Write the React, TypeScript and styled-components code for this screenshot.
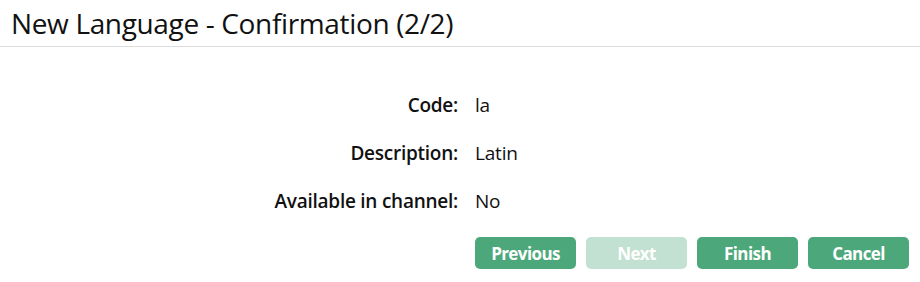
import React from 'react'
import styled, { createGlobalStyle } from 'styled-components'

const GlobalStyle = createGlobalStyle`
  html, body {
    margin: 0;
    padding: 0;
    background: #ffffff;
  }
  body {
    font-family: "Open Sans", "Noto Sans", sans-serif;
    color: #111111;
  }
`

const Page = styled.div`
  width: 920px;
  height: 282px;
  display: flex;
  flex-direction: column;
`

const Header = styled.div`
  height: 46px;
  border-bottom: 1px solid #dddddd;
  padding-left: 11px;
  display: flex;
  align-items: center;
`

const Title = styled.h1`
  margin: 0;
  font-size: 28px;
  font-weight: 400;
  letter-spacing: -0.35px;
  color: #111111;
`

const Body = styled.div`
  display: flex;
  flex-direction: column;
  padding: 34px 11px 0 0;
`

const Details = styled.div`
  display: grid;
  grid-template-columns: 458px auto;
  column-gap: 17px;
  row-gap: 0;
`

const Label = styled.div`
  text-align: right;
  font-size: 19px;
  font-weight: 600;
  letter-spacing: -0.25px;
  line-height: 48px;
`

const Value = styled.div`
  font-size: 19px;
  letter-spacing: -0.2px;
  line-height: 48px;
`

const Buttons = styled.div`
  display: flex;
  justify-content: flex-end;
  gap: 10px;
  margin-top: 12px;
`

const Button = styled.button<{ $disabled?: boolean }>`
  width: 101px;
  height: 32px;
  border: none;
  border-radius: 5px;
  background: ${p => (p.$disabled ? '#c3e1d2' : '#4ca87a')};
  color: #ffffff;
  font-family: "Open Sans", "Noto Sans", sans-serif;
  font-size: 17px;
  font-weight: 700;
  letter-spacing: -0.6px;
  padding: 0;
  cursor: ${p => (p.$disabled ? 'default' : 'pointer')};
`

const rows = [
  { label: 'Code:', value: 'la' },
  { label: 'Description:', value: 'Latin' },
  { label: 'Available in channel:', value: 'No' },
]

export default function App() {
  return (
    <>
      <GlobalStyle />
      <Page>
        <Header>
          <Title>New Language - Confirmation (2/2)</Title>
        </Header>
        <Body>
          <Details>
            {rows.map(r => (
              <React.Fragment key={r.label}>
                <Label>{r.label}</Label>
                <Value>{r.value}</Value>
              </React.Fragment>
            ))}
          </Details>
          <Buttons>
            <Button>Previous</Button>
            <Button $disabled>Next</Button>
            <Button>Finish</Button>
            <Button>Cancel</Button>
          </Buttons>
        </Body>
      </Page>
    </>
  )
}
